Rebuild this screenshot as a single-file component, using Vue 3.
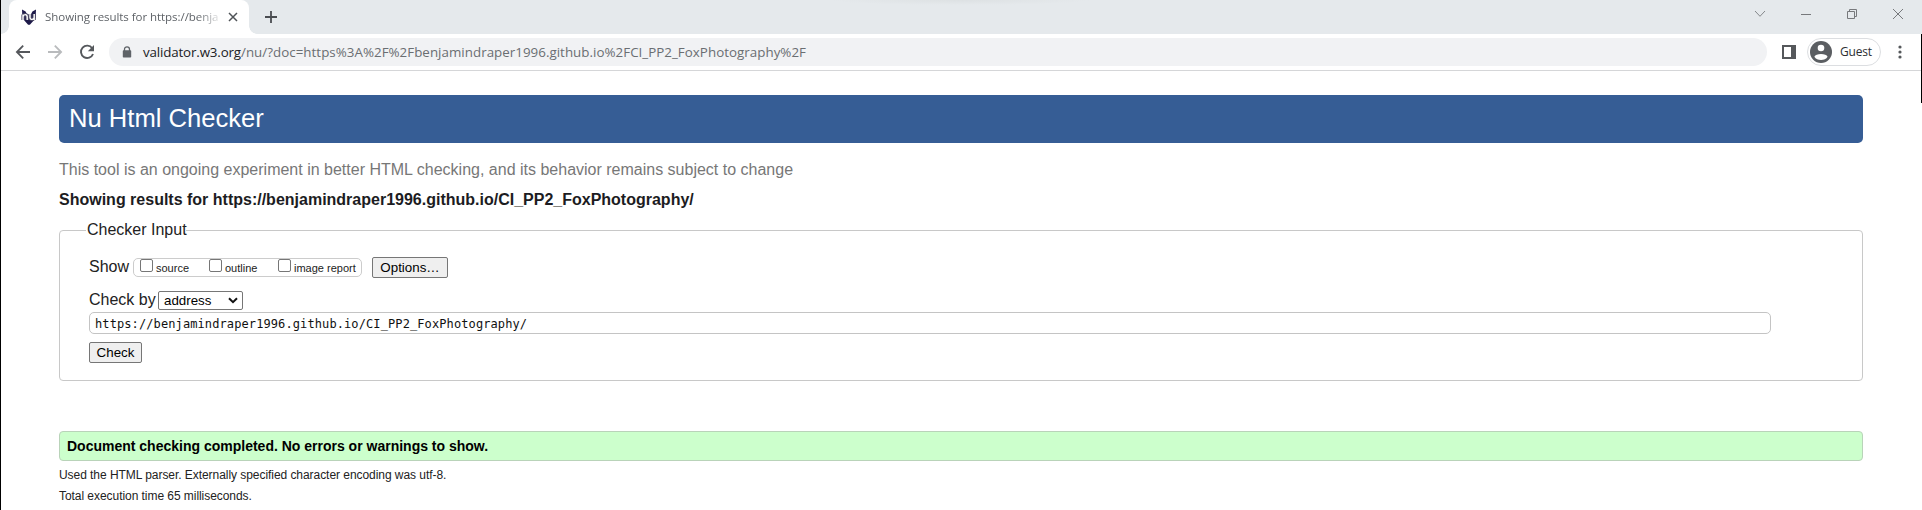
<script setup>
const options = ['source', 'outline', 'image report']
</script>

<template>
  <div class="window">
    <div class="tabstrip">
      <div class="tab">
        <svg class="favicon" width="16" height="16" viewBox="0 0 16 16">
          <path d="M1 0.6L4.6 2.4L6.4 6H9.6L11.4 2.4L15 0.6L14.6 9L12.2 12L8.9 15.8H7.1L3.8 12L1.4 9Z" fill="#1e1a4a" />
          <path d="M2 11V5.4M2 7.6C2.6 4.9 6.2 4.9 6.2 7.8V11M9 5V8.6C9 11 13.2 11 13.2 8.3V5M13.2 8V11" fill="none" stroke="#4b4863" stroke-width="3.2" />
          <path d="M2 11V5.4M2 7.6C2.6 4.9 6.2 4.9 6.2 7.8V11M9 5V8.6C9 11 13.2 11 13.2 8.3V5M13.2 8V11" fill="none" stroke="#fff" stroke-width="1.4" />
        </svg>
        <span class="tab-title">Showing results for https://benja</span>
        <svg class="tab-close" width="10" height="10" viewBox="0 0 10 10"><path d="M1 1L9 9M9 1L1 9" stroke="#4f5357" stroke-width="1.5" /></svg>
      </div>
      <svg class="newtab" width="12" height="12" viewBox="0 0 12 12"><path d="M6 0V12M0 6H12" stroke="#4a4d51" stroke-width="1.8" /></svg>
      <div class="caption">
        <svg width="12" height="12" viewBox="0 0 12 12"><path d="M1 3L6 8.3L11 3" fill="none" stroke="#85888b" /></svg>
        <svg width="12" height="12" viewBox="0 0 12 12"><path d="M1 6.5H11" stroke="#77797c" /></svg>
        <svg width="12" height="12" viewBox="0 0 12 12"><path d="M1.5 3.5H8.5V10.5H1.5ZM3.5 3.5V1.5H10.5V8.5H8.5" fill="none" stroke="#77797c" /></svg>
        <svg width="12" height="12" viewBox="0 0 12 12"><path d="M1 1L11 11M11 1L1 11" stroke="#77797c" /></svg>
      </div>
    </div>

    <div class="toolbar">
      <svg class="nav" width="16" height="16" viewBox="0 0 16 16"><path d="M15 8H2M8.2 1.7L1.9 8L8.2 14.3" fill="none" stroke="#55585c" stroke-width="1.8" /></svg>
      <svg class="nav" width="16" height="16" viewBox="0 0 16 16"><path d="M1 8H14M7.8 1.7L14.1 8L7.8 14.3" fill="none" stroke="#b9bbbd" stroke-width="1.8" /></svg>
      <svg class="nav" width="16" height="16" viewBox="0 0 16 16"><path d="M13.2 4.2A6.2 6.2 0 1 0 14 10" fill="none" stroke="#55585c" stroke-width="1.9" /><path d="M15 1V7.2H8.8Z" fill="#55585c" /></svg>
      <div class="omnibox">
        <svg class="lock" width="10" height="12" viewBox="0 0 10 12"><path d="M2.5 5V3.3A2.5 2.5 0 0 1 7.5 3.3V5" fill="none" stroke="#5f6368" stroke-width="1.3" /><rect x="0.8" y="4.3" width="8.4" height="7.2" rx="0.8" fill="#5f6368" /></svg>
        <span class="url"><span class="host">validator.w3.org</span>/nu/?doc=https%3A%2F%2Fbenjamindraper1996.github.io%2FCI_PP2_FoxPhotography%2F</span>
      </div>
      <svg class="panel" width="14" height="14" viewBox="0 0 14 14"><path d="M0 0H14V14H0ZM2 2V12H9V2Z" fill="#55585b" fill-rule="evenodd" /></svg>
      <div class="profile">
        <svg width="22" height="22" viewBox="0 0 22 22"><circle cx="11" cy="11" r="11" fill="#5b5e62" /><circle cx="11" cy="7" r="3.3" fill="#fff" /><path d="M4.4 15.7C5.5 12.2 16.5 12.2 17.6 15.7C15.2 20 6.8 20 4.4 15.7Z" fill="#fff" /></svg>
        <span>Guest</span>
      </div>
      <svg class="menu" width="4" height="14" viewBox="0 0 4 14"><g fill="#55585b"><circle cx="2" cy="2" r="1.6" /><circle cx="2" cy="7" r="1.6" /><circle cx="2" cy="12" r="1.6" /></g></svg>
    </div>

    <main class="page">
      <h1><span>Nu Html Checker</span></h1>
      <p class="tagline">This tool is an ongoing experiment in better HTML checking, and its behavior remains subject to change</p>
      <h2>Showing results for https://benjamindraper1996.github.io/CI_PP2_FoxPhotography/</h2>

      <section class="checker">
        <div class="legend">Checker Input</div>
        <div class="row show-row">
          <span class="label show">Show</span>
          <div class="choices">
            <label v-for="o in options" :key="o"><input type="checkbox"><span>{{ o }}</span></label>
          </div>
          <button class="options" type="button">Options…</button>
        </div>
        <div class="row by-row">
          <span class="label by">Check by</span>
          <div class="select"><span>address</span><svg width="10" height="7" viewBox="0 0 10 7"><path d="M1 1.2L5 5.2L9 1.2" fill="none" stroke="#111" stroke-width="2" /></svg></div>
        </div>
        <div class="address">https://benjamindraper1996.github.io/CI_PP2_FoxPhotography/</div>
        <button class="check" type="button">Check</button>
      </section>

      <p class="success"><span>Document checking completed. No errors or warnings to show.</span></p>
      <p class="detail parser">Used the HTML parser. Externally specified character encoding was utf-8.</p>
      <p class="detail time">Total execution time 65 milliseconds.</p>
    </main>
    <i class="edge left"></i>
    <i class="edge right"></i>
  </div>
</template>

<style>
html, body { margin: 0; overflow: hidden; background: #fff; }
</style>

<style scoped>
* { box-sizing: border-box; }
svg { display: block; flex: none; }
span { white-space: nowrap; }
.window { position: relative; width: 1922px; height: 510px; overflow: hidden; font-family: "Liberation Sans", Arial, sans-serif; color: #222; }
.edge { position: absolute; background: #000; width: 1px; }
.left { left: 0; top: 0; height: 510px; }
.right { right: 0; top: 34px; height: 69px; }
.tabstrip { display: flex; height: 34px; background: radial-gradient(ellipse 130px 5px at 960px 0, #dde1e3, #e5e9ec); padding-left: 9px; align-items: center; }
.tab { display: flex; position: relative; width: 240px; height: 34px; background: #fff; border-radius: 8px 8px 0 0; align-items: center; padding-left: 12px; }
.tab::before, .tab::after { content: ""; position: absolute; bottom: 0; width: 8px; height: 8px; }
.tab::before { left: -8px; background: radial-gradient(circle at 0 0, transparent 7.5px, #fff 8px); }
.tab::after { right: -8px; background: radial-gradient(circle at 100% 0, transparent 7.5px, #fff 8px); }
.tab-title { margin-left: 8px; width: 175px; font: 11.5px/20px "Open Sans", sans-serif; letter-spacing: -0.05px; color: #5f6368; mask-image: linear-gradient(to right, #000 152px, transparent 178px); }
.tab-close { margin-left: 8px; }
.newtab { margin-left: 16px; }
.caption { display: flex; gap: 34px; margin-left: auto; padding-right: 18px; margin-top: -6px; }
.toolbar { display: flex; align-items: center; height: 37px; border-bottom: 1px solid #d5d6d8; padding-left: 15px; background: #fff; }
.nav { margin-right: 16px; }
.omnibox { display: flex; align-items: center; width: 1658px; height: 28px; border-radius: 14px; background: #f1f2f4; padding-left: 13px; margin-left: -2px; }
.lock { margin: 0 11px 0 0; }
.url { font: 13.35px/22px "Open Sans", sans-serif; letter-spacing: 0.03px; color: #6a6e72; }
.host { color: #202124; letter-spacing: -0.15px; }
.panel { margin-left: 15px; }
.profile { display: flex; align-items: center; width: 74px; height: 28px; border: 1px solid #dcdee1; border-radius: 14px; margin-left: 11px; padding-left: 2px; font: 12px/18px "Open Sans", sans-serif; color: #2d2f32; }
.profile span { margin-left: 8px; letter-spacing: -0.2px; }
.menu { margin-left: 17px; }
.page { display: flex; flex-direction: column; width: 1804px; margin: 24px 0 0 59px; }
h1, h2, p { margin: 0; white-space: nowrap; }
h1 { height: 48px; border-radius: 5px; background: #365d95; color: #fff; font-size: 25.6px; font-weight: 400; line-height: 46px; padding-left: 10px; }
.tagline { font-size: 16px; line-height: 20px; margin-top: 17px; color: #777; }
h2 { font-size: 16px; line-height: 20px; margin-top: 10px; color: #1c1c22; }
.checker { margin-top: 20px; height: 151px; border: 1px solid #c8c8c8; border-radius: 4px; padding-left: 29px; }
.legend { width: 100px; height: 20px; line-height: 20px; margin: -11px 0 0 -3px; padding-left: 1px; background: #fff; font-size: 16px; white-space: nowrap; }
.row { display: flex; align-items: center; }
.show-row { margin-top: 17px; height: 21px; }
.label { font-size: 16px; line-height: 20px; }
.show { width: 44px; margin-top: -1px; }
.choices { display: flex; align-items: center; width: 229px; height: 19px; border: 1px solid #ccc; border-radius: 5px; font-size: 11px; padding-left: 6px; }
.choices label { display: flex; align-items: center; width: 69px; }
.choices input { appearance: none; flex: none; width: 13px; height: 13px; margin: -4px 3px 0 0; border: 1px solid #767676; border-radius: 2px; background: #fff; }
.choices span { line-height: 14px; margin-top: 1px; }
button { font: 13.33px/17px "Liberation Sans", Arial, sans-serif; color: #000; background: #efefef; border: 1px solid #767676; border-radius: 2px; padding: 0; height: 21px; white-space: nowrap; }
.options { width: 76px; margin-left: 10px; }
.by-row { margin-top: 13px; height: 19px; }
.by { width: 69px; margin-top: -2px; }
.select { display: flex; align-items: center; justify-content: space-between; width: 85px; height: 19px; border: 1px solid #767676; border-radius: 2px; padding: 0 4px 0 5px; font-size: 13.33px; color: #000; background: #fff; }
.address { width: 1682px; height: 22px; margin-top: 2px; border: 1px solid #c4c4c4; border-radius: 5px; padding-left: 5px; font: 12px/22px "DejaVu Sans Mono", monospace; letter-spacing: 0.1px; color: #111; white-space: nowrap; }
.check { display: block; width: 53px; margin-top: 8px; }
.success { margin-top: 50px; height: 30px; border: 1px solid #b9d3b9; border-radius: 4px; background: #cfc; color: #000; font-size: 14px; font-weight: 700; line-height: 29px; padding-left: 7px; }
.detail { font-size: 12px; line-height: 16px; letter-spacing: -0.052px; }
.parser { margin-top: 6px; }
.time { margin-top: 5px; }
</style>
